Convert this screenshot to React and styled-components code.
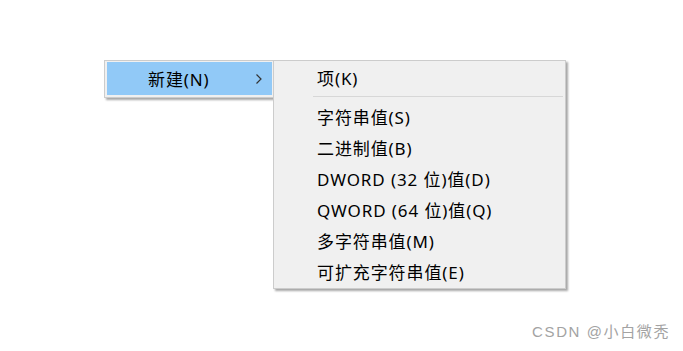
import styled, { createGlobalStyle } from "styled-components";

const GlobalStyle = createGlobalStyle`
  html, body {
    margin: 0;
    padding: 0;
    background: #ffffff;
  }
  body {
    font-family: "Noto Sans", "Noto Sans CJK SC", sans-serif;
  }
`;

const subItems = [
  "字符串值(S)",
  "二进制值(B)",
  "DWORD (32 位)值(D)",
  "QWORD (64 位)值(Q)",
  "多字符串值(M)",
  "可扩充字符串值(E)",
];

export default function App() {
  return (
    <Page>
      <GlobalStyle />
      <Menus>
        <Menu>
          <ParentItem>
            <span>新建(N)</span>
            <Arrow viewBox="0 0 8 12">
              <path d="M1.5 1.5 L6 6 L1.5 10.5" />
            </Arrow>
          </ParentItem>
        </Menu>
        <SubMenu>
          <Item>项(K)</Item>
          <Separator />
          {subItems.map((t) => (
            <Item key={t}>{t}</Item>
          ))}
        </SubMenu>
      </Menus>
      <Watermark>CSDN @小白微秃</Watermark>
    </Page>
  );
}

const Page = styled.div`
  position: relative;
  width: 683px;
  height: 351px;
  padding: 60px 0 0 104px;
  box-sizing: border-box;
`;

const Menus = styled.div`
  display: flex;
  align-items: flex-start;
`;

const Menu = styled.div`
  width: 170px;
  background: #f0f0f0;
  border: 1px solid #cccccc;
  padding: 1px 1px 2px 2px;
  box-sizing: border-box;
  box-shadow: 2px 2px 2px rgba(0, 0, 0, 0.35);
`;

const ParentItem = styled.div`
  height: 33px;
  background: #91c9f7;
  display: flex;
  align-items: center;
  justify-content: space-between;
  padding: 0 9px 0 41px;
  font-size: 17px;
  letter-spacing: 0.9px;
  color: #000;
`;

const Arrow = styled.svg`
  width: 8px;
  height: 12px;
  fill: none;
  stroke: #333;
  stroke-width: 1.2;
`;

const SubMenu = styled.div`
  position: relative;
  z-index: 1;
  margin-left: -1px;
  width: 293px;
  background: #f0f0f0;
  border: 1px solid #cccccc;
  padding: 1px 2px 1px 2px;
  box-sizing: border-box;
  box-shadow: 2px 2px 2px rgba(0, 0, 0, 0.35);
`;

const Item = styled.div`
  height: 31px;
  display: flex;
  align-items: center;
  padding-left: 41px;
  font-size: 17px;
  letter-spacing: 0.9px;
  color: #000;
  white-space: nowrap;
`;

const Separator = styled.div`
  height: 1px;
  background: #d7d7d7;
  margin: 3px 0 4px 37px;
`;

const Watermark = styled.div`
  position: absolute;
  right: 13px;
  bottom: 10px;
  font-family: "Liberation Sans", "Noto Sans CJK SC", sans-serif;
  font-size: 15px;
  letter-spacing: 1.6px;
  color: #a3a3a3;
`;
